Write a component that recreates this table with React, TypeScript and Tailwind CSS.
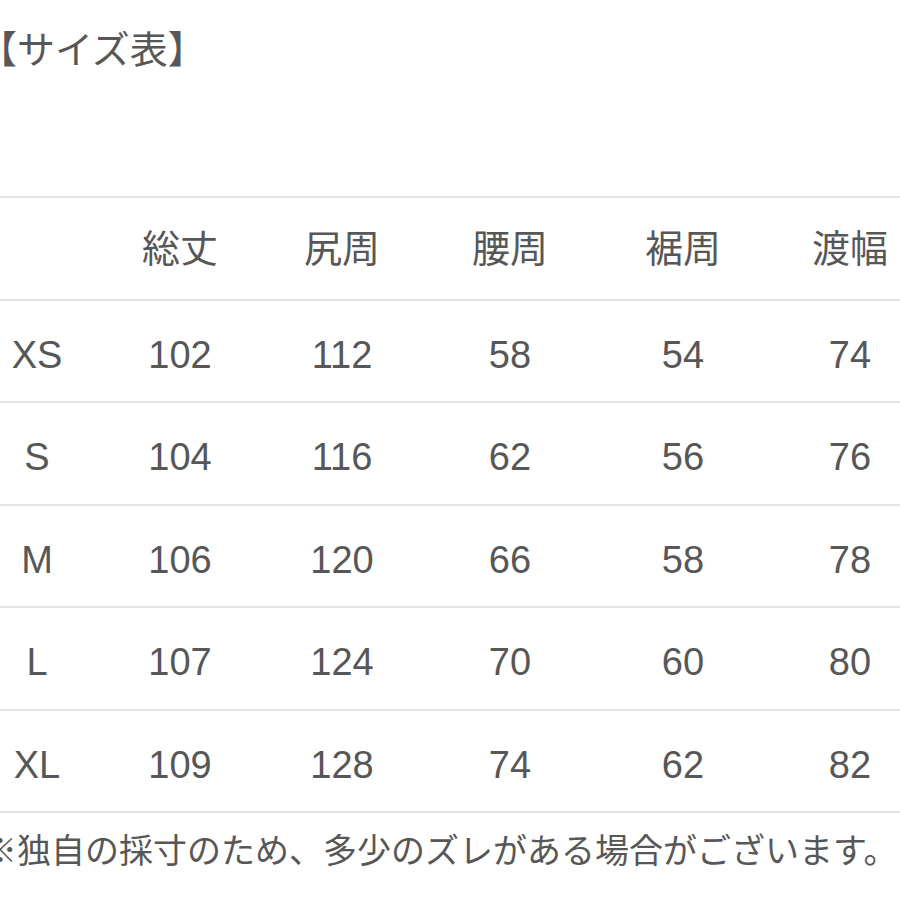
const HEAD = ["", "総丈", "尻周", "腰周", "裾周", "渡幅"];

const ROWS: [string, number, number, number, number, number][] = [
  ["XS", 102, 112, 58, 54, 74],
  ["S", 104, 116, 62, 56, 76],
  ["M", 106, 120, 66, 58, 78],
  ["L", 107, 124, 70, 60, 80],
  ["XL", 109, 128, 74, 62, 82],
];

// column widths chosen so each column's centre lands where the chart has it
const GRID = "grid grid-cols-[74px_212px_112px_224px_122px_212px] items-center";

export default function App() {
  return (
    <div className="h-[900px] w-[900px] overflow-hidden bg-white font-['Liberation_Sans','Noto_Sans_CJK_JP',sans-serif] text-[#575757]">
      <h1 className="-ml-[21px] h-[196px] whitespace-nowrap pt-[31px] text-[38px] font-normal leading-none">
        【サイズ表】
      </h1>

      <div className="border-b-2 border-[#e3e3e3]">
        <div className={`${GRID} h-[102.5px] border-t-2 border-[#e3e3e3] text-[38px]`}>
          {HEAD.map((h, i) => (
            <span key={i} className="pt-[2px] text-center leading-none">
              {h}
            </span>
          ))}
        </div>
        {ROWS.map((r) => (
          <div key={r[0]} className={`${GRID} h-[102.5px] border-t-2 border-[#e3e3e3] text-[38px]`}>
            {r.map((v, i) => (
              <span key={i} className="pt-[8px] text-center leading-none">
                {v}
              </span>
            ))}
          </div>
        ))}
      </div>

      <p className="-ml-[17px] mt-[21px] whitespace-nowrap text-[34px] leading-none">
        ※独自の採寸のため、多少のズレがある場合がございます。
      </p>
    </div>
  );
}
